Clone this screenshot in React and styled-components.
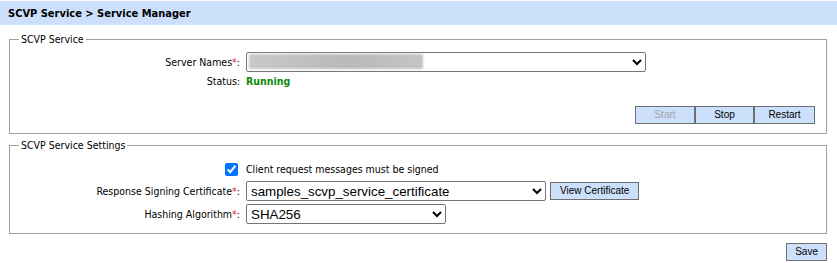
import React from "react";
import styled, { createGlobalStyle } from "styled-components";

const GlobalStyle = createGlobalStyle`
  body {
    margin: 0;
    background: #ffffff;
    color: #000000;
    font-family: "DejaVu Sans Condensed", "DejaVu Sans", sans-serif;
    font-stretch: condensed;
    font-size: 10.5px;
  }
`;

function App() {
  return (
    <>
      <GlobalStyle />
      <TitleBar>SCVP Service &gt; Service Manager</TitleBar>
      <Page>
        <FieldsetStyled $top={8}>
          <Legend>SCVP Service</Legend>
          <FormGrid $padTop={6} $rowGap={1}>
            <Label>
              Server Names<Required>*</Required>:
            </Label>
            <SelectWrap>
              <SelectStyled $width={400} defaultValue="srv">
                <option value="srv"></option>
              </SelectStyled>
              <Redacted />
            </SelectWrap>
            <Label>Status:</Label>
            <StatusText>Running</StatusText>
          </FormGrid>
          <ButtonBar>
            <ActionButton disabled $width={60}>
              Start
            </ActionButton>
            <ActionButton $width={59}>Stop</ActionButton>
            <ActionButton $width={61}>Restart</ActionButton>
          </ButtonBar>
        </FieldsetStyled>

        <FieldsetStyled $top={5}>
          <Legend>SCVP Service Settings</Legend>
          <FormGrid $padTop={8} $rowGap={3}>
            <CheckBox type="checkbox" defaultChecked />
            <CheckLabel>Client request messages must be signed</CheckLabel>
            <Label>
              Response Signing Certificate<Required>*</Required>:
            </Label>
            <ControlRow>
              <SelectStyled $width={300} defaultValue="cert">
                <option value="cert">samples_scvp_service_certificate</option>
              </SelectStyled>
              <ActionButton $pad={9}>View Certificate</ActionButton>
            </ControlRow>
            <Label>
              Hashing Algorithm<Required>*</Required>:
            </Label>
            <SelectStyled $width={200} defaultValue="SHA256">
              <option value="SHA256">SHA256</option>
            </SelectStyled>
          </FormGrid>
        </FieldsetStyled>

        <SaveBar>
          <ActionButton $pad={8}>Save</ActionButton>
        </SaveBar>
      </Page>
    </>
  );
}

const TitleBar = styled.div`
  margin-top: 1px;
  height: 24px;
  background: #cce0fb;
  display: flex;
  align-items: center;
  padding-left: 8px;
  font-size: 11px;
  font-weight: bold;
`;

const Page = styled.div`
  padding: 0 10px 0 9px;
`;

const FieldsetStyled = styled.fieldset`
  margin: ${(p) => p.$top}px 0 0 0;
  padding: 0 0 9px 0;
  min-width: 0;
  border: 1px solid #a0a0a0;
`;

const Legend = styled.legend`
  margin-left: 9px;
  padding: 0 2px;
  line-height: 13px;
`;

const FormGrid = styled.div`
  display: grid;
  grid-template-columns: 230px auto;
  column-gap: 6px;
  row-gap: ${(p) => p.$rowGap}px;
  align-items: center;
  justify-items: start;
  padding-top: ${(p) => p.$padTop}px;
`;

const Label = styled.div`
  justify-self: end;
  white-space: nowrap;
  line-height: 16px;
`;

const Required = styled.span`
  color: #e02020;
`;

const StatusText = styled.div`
  color: #0a8a0a;
  font-weight: bold;
  line-height: 16px;
`;

const SelectWrap = styled.div`
  position: relative;
  display: flex;
`;

const SelectStyled = styled.select`
  width: ${(p) => p.$width}px;
  height: 20px;
  margin: 0;
  padding: 0;
  border: 1px solid #767676;
  border-radius: 2px;
  background: #ffffff;
  color: #000000;
  font-family: "Liberation Sans", Arial, sans-serif;
  font-size: 13.333px;
`;

const Redacted = styled.div`
  position: absolute;
  left: 3px;
  top: 2px;
  width: 174px;
  height: 15px;
  background: linear-gradient(90deg, #c9c9c9, #b9b9b9 55%, #c4c4c4);
  filter: blur(0.8px);
  pointer-events: none;
`;

const ControlRow = styled.div`
  display: flex;
  align-items: center;
  gap: 4px;
`;

const CheckBox = styled.input`
  justify-self: end;
  width: 13px;
  height: 13px;
  margin: 0 2px 0 0;
`;

const CheckLabel = styled.div`
  line-height: 18px;
`;

const ButtonBar = styled.div`
  display: flex;
  justify-content: flex-end;
  margin-top: 17px;
  padding-right: 11px;
`;

const SaveBar = styled.div`
  display: flex;
  justify-content: flex-end;
  margin-top: 9px;
`;

const ActionButton = styled.button`
  width: ${(p) => (p.$width ? `${p.$width}px` : "auto")};
  height: 18px;
  margin: 0;
  padding: 0 ${(p) => p.$pad || 0}px;
  border: 1px solid #707070;
  border-radius: 0;
  background: #cce0fb;
  color: #000000;
  font-family: "Liberation Sans", Arial, sans-serif;
  font-size: 10px;
  line-height: 16px;

  &:disabled {
    color: #a3a3a3;
  }
`;

export default App;
